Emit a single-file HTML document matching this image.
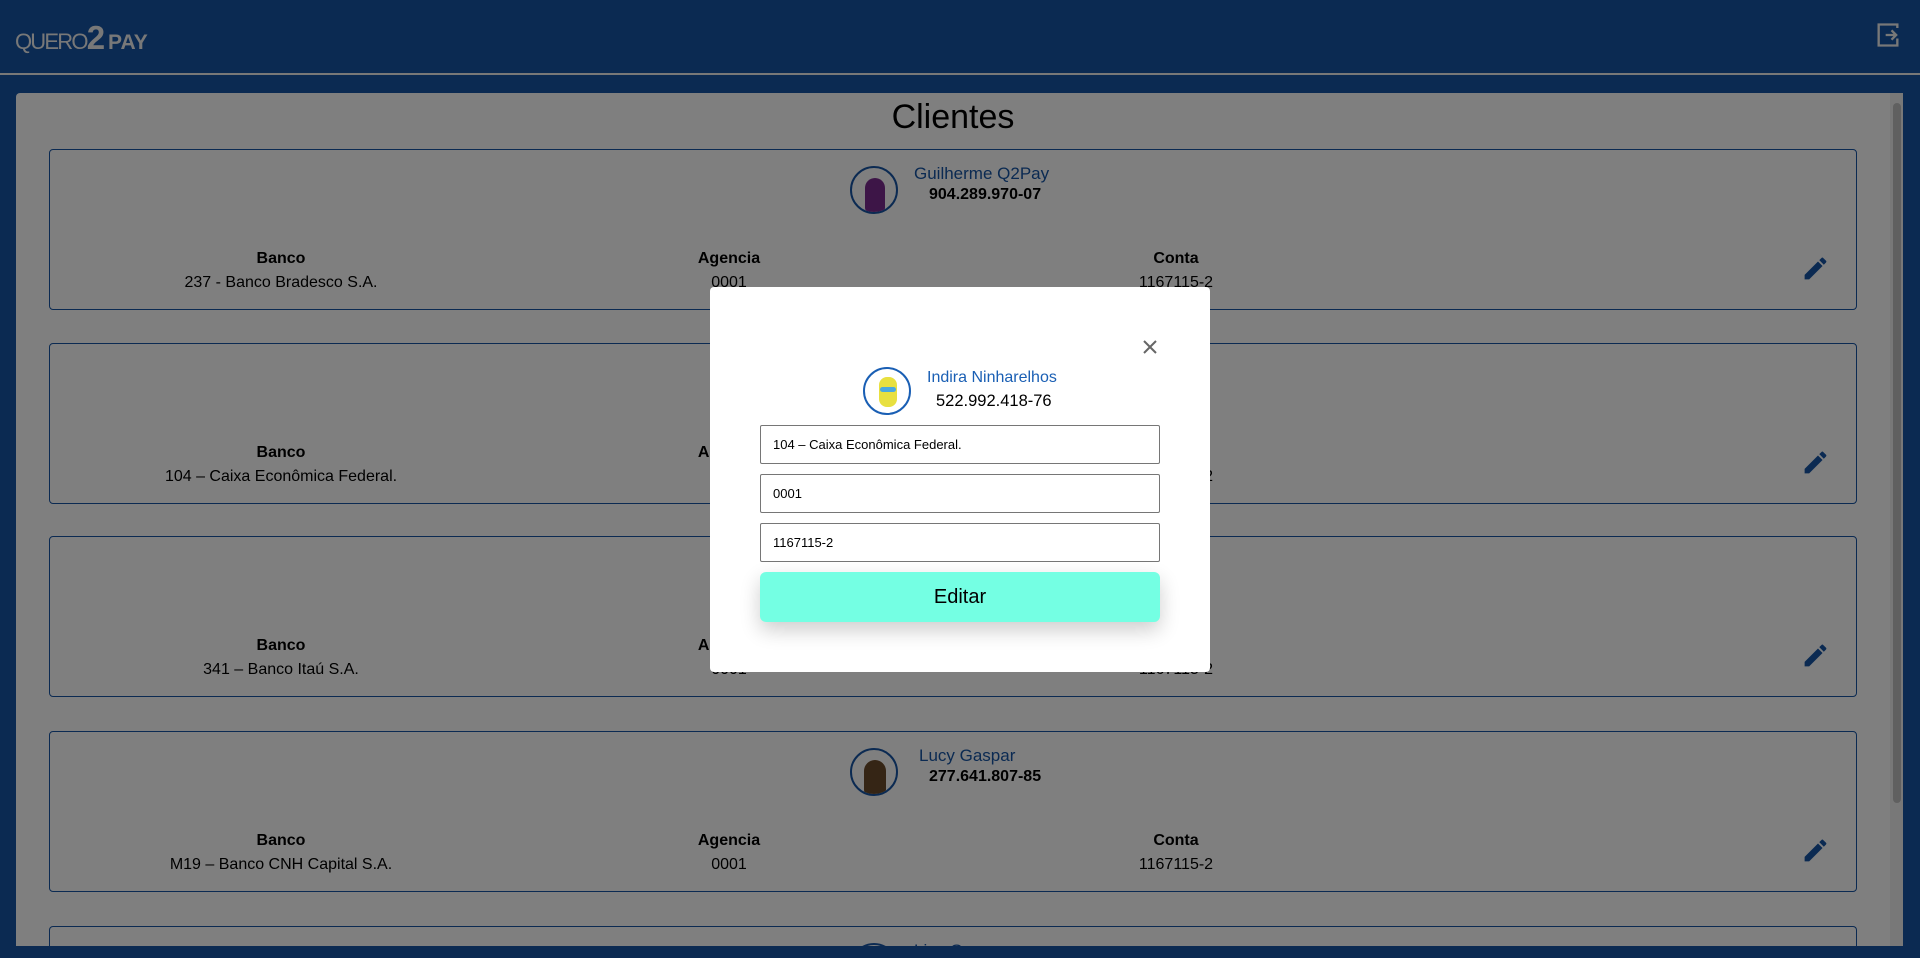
<!DOCTYPE html>
<html><head><meta charset="utf-8"><style>
*{box-sizing:border-box;margin:0;padding:0}
html,body{width:1920px;height:958px;overflow:hidden}
body{background:#1654a4;font-family:"Liberation Sans",sans-serif;position:relative}
.hdr{position:absolute;left:0;top:0;width:1920px;height:75px;background:#1654a4;border-bottom:2px solid #f0f0f0}
.logo{position:absolute;left:15px;top:19px;color:#f0f0f0;white-space:nowrap}
.logo .q{font-size:22px;font-weight:300;letter-spacing:-1.8px;vertical-align:baseline}
.logo .t{font-size:33px;font-weight:bold}
.logo .p{font-size:21px;font-weight:bold;margin-left:3px}
.panel{position:absolute;left:16px;top:93px;width:1887px;height:853px;background:#fff;border-radius:4px 0 0 0;overflow:hidden}
.sb{position:absolute;left:1874px;top:0;width:13px;height:853px;background:#f1f1f1}
.sb div{position:absolute;left:3px;top:10px;width:8px;height:700px;background:#c1c1c1;border-radius:4px}
h1{position:absolute;left:0;width:1874px;top:5px;text-align:center;font-weight:normal;font-size:34px;color:#000}
.card{position:absolute;left:33px;width:1808px;height:161px;border:1px solid #1654a4;border-radius:4px}
.av{position:absolute;left:800px;top:16px;width:48px;height:48px;border:2px solid #1654a4;border-radius:50%;overflow:hidden;background:#fff}
.nm{position:absolute;left:864px;top:14px;font-size:17px;color:#1654a4}
.cpf{position:absolute;left:879px;top:36px;font-size:16px;font-weight:bold;color:#000}
.col{position:absolute;top:97px;width:300px;text-align:center;font-size:16px;color:#000;line-height:24px}
.col b{display:block}
.pen{position:absolute;left:1751px;top:104px}
.ov{position:absolute;left:0;top:0;width:1920px;height:958px;background:rgba(0,0,0,.5)}
.modal{position:absolute;left:710px;top:287px;width:500px;height:385px;background:#fff;border-radius:4px}
.x{position:absolute;left:430px;top:50px}
.mav{position:absolute;left:153px;top:80px;width:48px;height:48px;border:2px solid #1a5fb4;border-radius:50%;overflow:hidden}
.mnm{position:absolute;left:217px;top:82px;font-size:16px;color:#1a5fb4}
.mcpf{position:absolute;left:226px;top:105px;font-size:16.5px;color:#000}
.in{position:absolute;left:50px;width:400px;height:39px;border:1px solid #767676;border-radius:2px;font-size:13px;padding-left:12px;line-height:37px;color:#000}
.btn{position:absolute;left:50px;top:285px;width:400px;height:50px;background:#74ffe3;border-radius:6px;text-align:center;line-height:50px;font-size:20px;color:#000;box-shadow:0 8px 20px rgba(0,0,0,.2)}
</style></head><body>
<div class="hdr">
<div class="logo"><span class="q">QUERO</span><span class="t">2</span><span class="p">PAY</span></div>
<svg style="position:absolute;left:1874px;top:21px" width="28" height="28" viewBox="0 0 24 24" fill="none" stroke="#f0f0f0" stroke-width="2"><path d="M10 3H4v18h16V15M20 3v3M4 3h16v3M10 12h9M15 8l4 4-4 4"/></svg>
</div>
<div class="panel">
<h1>Clientes</h1>
<div class="card" style="top:56px">
<div class="av"><div style="position:absolute;left:13px;top:10px;width:20px;height:34px;background:#7a2a8e;border-radius:10px 10px 4px 4px"></div></div>
<div class="nm">Guilherme Q2Pay</div><div class="cpf">904.289.970-07</div>
<div class="col" style="left:81px"><b>Banco</b>237 - Banco Bradesco S.A.</div>
<div class="col" style="left:529px"><b>Agencia</b>0001</div>
<div class="col" style="left:976px"><b>Conta</b>1167115-2</div>
<svg class="pen" width="29" height="29" viewBox="0 0 24 24"><path fill="#1654a4" d="M3 17.25V21h3.75L17.81 9.94l-3.75-3.75L3 17.25zM20.71 7.04a1 1 0 0 0 0-1.41l-2.34-2.34a1 1 0 0 0-1.410 0l-1.83 1.83 3.75 3.75 1.83-1.830z"/></svg>
</div>
<div class="card" style="top:250px">
<div class="col" style="left:81px"><b>Banco</b>104 – Caixa Econômica Federal.</div>
<div class="col" style="left:529px"><b>Agencia</b>0001</div>
<div class="col" style="left:976px"><b>Conta</b>1167115-2</div>
<svg class="pen" width="29" height="29" viewBox="0 0 24 24"><path fill="#1654a4" d="M3 17.25V21h3.75L17.81 9.94l-3.75-3.75L3 17.25zM20.71 7.04a1 1 0 0 0 0-1.41l-2.34-2.34a1 1 0 0 0-1.41 0l-1.83 1.83 3.75 3.75 1.83-1.83z"/></svg>
</div>
<div class="card" style="top:443px">
<div class="col" style="left:81px"><b>Banco</b>341 – Banco Itaú S.A.</div>
<div class="col" style="left:529px"><b>Agencia</b>0001</div>
<div class="col" style="left:976px"><b>Conta</b>1167115-2</div>
<svg class="pen" width="29" height="29" viewBox="0 0 24 24"><path fill="#1654a4" d="M3 17.25V21h3.75L17.81 9.94l-3.75-3.75L3 17.25zM20.71 7.04a1 1 0 0 0 0-1.41l-2.34-2.34a1 1 0 0 0-1.41 0l-1.83 1.83 3.75 3.75 1.83-1.83z"/></svg>
</div>
<div class="card" style="top:638px">
<div class="av"><div style="position:absolute;left:12px;top:10px;width:22px;height:34px;background:#6b4a2a;border-radius:11px 11px 4px 4px"></div></div>
<div class="nm" style="left:869px">Lucy Gaspar</div><div class="cpf">277.641.807-85</div>
<div class="col" style="left:81px"><b>Banco</b>M19 – Banco CNH Capital S.A.</div>
<div class="col" style="left:529px"><b>Agencia</b>0001</div>
<div class="col" style="left:976px"><b>Conta</b>1167115-2</div>
<svg class="pen" width="29" height="29" viewBox="0 0 24 24"><path fill="#1654a4" d="M3 17.25V21h3.75L17.81 9.94l-3.75-3.75L3 17.25zM20.71 7.04a1 1 0 0 0 0-1.41l-2.34-2.34a1 1 0 0 0-1.41 0l-1.83 1.83 3.75 3.75 1.83-1.83z"/></svg>
</div>
<div class="card" style="top:833px;height:40px;border-bottom:none">
<div class="av"></div>
<div class="nm">Lisa Gaspar</div>
</div>
<div class="sb"><div></div></div>
</div>
<div class="ov"></div>
<div class="modal">
<svg class="x" width="20" height="20" viewBox="0 0 20 20"><path d="M4 4L16 16M16 4L4 16" stroke="#666" stroke-width="2"/></svg>
<div class="mav"><div style="position:absolute;left:14px;top:8px;width:18px;height:30px;background:#e8e040;border-radius:8px"></div><div style="position:absolute;left:15px;top:18px;width:16px;height:5px;background:#4aa8e0;border-radius:3px"></div></div>
<div class="mnm">Indira Ninharelhos</div>
<div class="mcpf">522.992.418-76</div>
<div class="in" style="top:138px">104 – Caixa Econômica Federal.</div>
<div class="in" style="top:187px">0001</div>
<div class="in" style="top:236px">1167115-2</div>
<div class="btn">Editar</div>
</div>
</body></html>
